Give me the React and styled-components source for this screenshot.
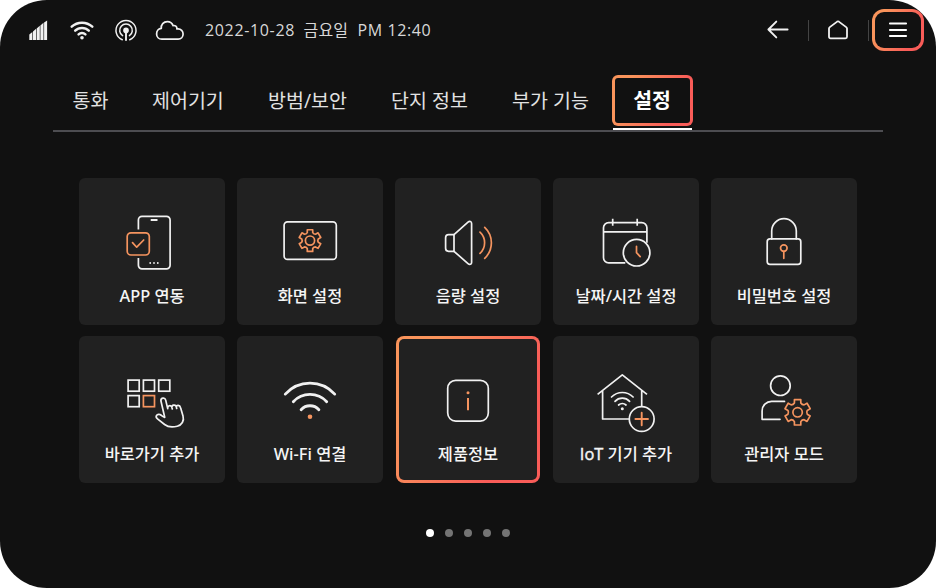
import React from "react";
import styled, { createGlobalStyle, css } from "styled-components";

const INK = "#f1f1f1";
const ACCENT = "#f5945f";
const BG = "#111111";
const TILE = "#212121";

const GlobalStyle = createGlobalStyle`
  * { box-sizing: border-box; }
  html, body { margin: 0; padding: 0; background: #fff; }
  body {
    width: 936px;
    height: 588px;
    overflow: hidden;
    font-family: "Open Sans", "Noto Sans CJK KR", sans-serif;
    -webkit-font-smoothing: antialiased;
  }
  button { font: inherit; color: inherit; border: 0; padding: 0; background: none; }
  svg { display: block; flex: none; }
`;

const gradientBorder = (fill) => css`
  border: 3px solid transparent;
  background:
    linear-gradient(${fill}, ${fill}) padding-box,
    linear-gradient(115deg, #f9945b 20%, #f95c58 75%) border-box;
`;

const Screen = styled.div`
  width: 936px;
  height: 588px;
  border-radius: 47px;
  background: ${BG};
  color: ${INK};
  display: flex;
  flex-direction: column;
`;

const TopBar = styled.header`
  height: 60px;
  padding: 0 12px 0 28px;
  display: flex;
  align-items: center;
  justify-content: space-between;
`;

const StatusGroup = styled.div`
  display: flex;
  align-items: center;
`;

const StatusIcons = styled.div`
  display: flex;
  width: 177px;
`;

const StatusText = styled.span`
  width: ${(p) => p.$width}px;
  font-size: 16px;
  line-height: 24px;
  color: #d8d8d8;
  white-space: nowrap;
  letter-spacing: ${(p) => p.$spacing || 0}px;
`;

const NavGroup = styled.nav`
  display: flex;
  align-items: center;
`;

const NavButton = styled.button`
  width: ${(p) => p.$width}px;
  height: 42px;
  display: flex;
  align-items: center;
  justify-content: center;
`;

const Divider = styled.i`
  width: 1.5px;
  height: 21px;
  background: #444;
`;

const MenuButton = styled.button`
  ${gradientBorder(BG)}
  width: 52px;
  height: 42px;
  margin-left: 3px;
  border-radius: 12px;
  display: flex;
  align-items: center;
  justify-content: center;
`;

const TabBar = styled.div`
  height: 57px;
  margin: 15px 53px 0;
  border-bottom: 2px solid #4d4d51;
  display: flex;
  align-items: flex-start;
`;

const Tab = styled.button`
  width: ${(p) => p.$width}px;
  height: 51px;
  padding-left: ${(p) => p.$inset || 0}px;
  font-size: 19.5px;
  line-height: 51px;
  text-align: left;
  white-space: nowrap;
  color: #e2e2e2;
`;

const ActiveTab = styled.div`
  width: 81px;
  height: 55px;
  display: flex;
  flex-direction: column;
  align-items: center;
  justify-content: space-between;
`;

const ActiveTabBox = styled.button`
  ${gradientBorder(BG)}
  width: 81px;
  height: 51px;
  padding-right: 1px;
  border-radius: 6px;
  font-size: 20.5px;
  font-weight: 700;
  line-height: 45px;
  color: #fff;
`;

const ActiveTabLine = styled.span`
  width: 79px;
  height: 2.5px;
  background: #fff;
`;

const TileGrid = styled.main`
  display: grid;
  grid-template-columns: repeat(5, 146px);
  grid-auto-rows: 147px;
  gap: 11px 12px;
  margin: 46px 79px 0;
`;

const Tile = styled.button`
  width: 146px;
  height: 147px;
  padding-top: 28px;
  border-radius: 6px;
  background: ${TILE};
  display: flex;
  flex-direction: column;
  align-items: center;
  ${(p) =>
    p.$highlighted &&
    css`
      ${gradientBorder(TILE)}
      width: 144px;
      margin: 0 1px;
      padding-top: 25px;
      border-radius: 8px;
    `}
`;

const TileLabel = styled.span`
  height: 36px;
  font-family: "Noto Sans", "Noto Sans CJK KR", sans-serif;
  font-size: 16.4px;
  font-weight: 500;
  line-height: 36px;
  white-space: nowrap;
  color: #f5f5f5;
`;

/* Latin run with a plain-stem capital I. */
const PlainLatin = styled.span`
  font-family: "Open Sans", sans-serif;
  -webkit-text-stroke: 0.4px #f5f5f5;
`;

const Pager = styled.footer`
  display: flex;
  justify-content: center;
  gap: 11px;
  margin-top: 46px;
`;

const Dot = styled.span`
  width: 8px;
  height: 8px;
  border-radius: 50%;
  background: ${(p) => (p.$on ? "#fff" : "#747474")};
`;

const IconSvg = styled.svg.attrs({ width: 72, height: 72, viewBox: "0 0 72 72" })`
  fill: none;
  stroke: ${INK};
  stroke-width: 1.7;
  stroke-linecap: round;
  stroke-linejoin: round;
  .accent { stroke: ${ACCENT}; }
  .accent-fill { fill: ${ACCENT}; stroke: none; }
  .ink-fill { fill: ${INK}; stroke: none; }
`;

/* Six-tooth cog outline centred on (cx, cy); r is the tip radius. */
function cogPath(cx, cy, r) {
  const at = (radius, deg) => {
    const a = (deg * Math.PI) / 180;
    return `${(cx + radius * Math.cos(a)).toFixed(2)} ${(cy + radius * Math.sin(a)).toFixed(2)}`;
  };
  const root = r * 0.75;
  let d = "";
  for (let i = 0; i < 6; i++) {
    const t = -90 + i * 60;
    d += `${i ? "L" : "M"}${at(root, t - 19)}L${at(r, t - 14)}L${at(r, t + 14)}L${at(root, t + 19)}`;
    d += `Q${at(r * 0.66, t + 30)} ${at(root, t + 41)}`;
  }
  return d + "Z";
}

const AppLinkIcon = () => (
  <IconSvg>
    <path d="M22.4 23.5V14a3.6 3.6 0 0 1 3.6-3.6h24.5A3.6 3.6 0 0 1 54.1 14v45.3a3.6 3.6 0 0 1-3.6 3.6H26a3.6 3.6 0 0 1-3.6-3.6v-7.3" strokeLinecap="butt" />
    <path d="M34.7 14h6.8" strokeLinecap="butt" strokeWidth="2" />
    <path d="M34.2 57h.01M38 57h.01M41.8 57h.01" strokeWidth="1.8" />
    <rect className="accent" x="11.2" y="26.8" width="22.1" height="22.2" rx="3.8" />
    <path className="accent" d="M16.5 36.6l4.2 4.6 7-7.2" />
  </IconSvg>
);

const DisplayIcon = () => (
  <IconSvg>
    <rect x="10.1" y="15.8" width="52.2" height="37.6" rx="3.4" />
    <path className="accent" d={cogPath(36, 34.6, 11.2)} />
    <circle className="accent" cx="36" cy="34.6" r="4.6" />
  </IconSvg>
);

const SoundIcon = () => (
  <IconSvg>
    <path d="M22 28.7h-5.4a3 3 0 0 0-3 3v10.6a3 3 0 0 0 3 3H22z" />
    <path d="M22 28.7L36 16.2c1.6-1.4 3.6-.8 3.6 1.2v39c0 2-2 2.6-3.6 1.2L22 45.3" />
    <path className="accent" d="M48 26.2a14.5 14.5 0 0 1 0 21.2M52.7 21.3a21.3 21.3 0 0 1 0 31" />
  </IconSvg>
);

const CalendarIcon = () => (
  <IconSvg>
    <path d="M35.3 56.9H18.7a5.2 5.2 0 0 1-5.2-5.2V21.8a5.2 5.2 0 0 1 5.2-5.2h33a5.2 5.2 0 0 1 5.2 5.2v15M13.5 25.8h43.4M22.7 12.7v7M47.2 12.7v7" strokeLinecap="butt" />
    <circle cx="46.6" cy="46.7" r="13.3" />
    <path className="accent" d="M46.5 40.3v6.4l3.7 3.9" />
  </IconSvg>
);

const LockIcon = () => (
  <IconSvg>
    <rect x="19.2" y="32.9" width="33.6" height="25.5" rx="2.8" />
    <path d="M23.7 32.9V25a12.3 12.3 0 0 1 24.6 0v7.9" />
    <circle className="accent" cx="35.8" cy="42.1" r="3.3" />
    <path className="accent" d="M35.8 45.4v6.9" />
  </IconSvg>
);

const SHORTCUT_CELLS = [
  [12.1, 16.1],
  [27.4, 16.1],
  [42.7, 16.1],
  [12.1, 31.6],
];

const ShortcutIcon = () => (
  <IconSvg>
    {SHORTCUT_CELLS.map(([x, y]) => (
      <rect key={`${x}-${y}`} x={x} y={y} width="11.1" height="11.1" strokeLinejoin="miter" />
    ))}
    <rect className="accent" x="27.4" y="31.6" width="11.1" height="11.1" strokeLinejoin="miter" />
    <path d="M48.7 53.3L45 37.3c-.8-3.4 3.8-4.6 4.7-1.2l2 8.5c-.5-3 3.4-4.2 4.2-1.2l.4 1.6-.4-1.6c-.3-2.6 3.7-3.3 4.4-.5l.4 1.6-.4-1.6c0-2 3.5-2.3 4.3.8l2.4 8.3c1.4 5-1.2 9-5.7 10.2-4.7 1.3-9.3 1-12.7-1.7l-7.1-5.6c-2.7-2.1-.8-5.1 2-4.5 2.1.4 2.9 2.4 5.2 2.9z" />
  </IconSvg>
);

const WifiIcon = () => (
  <IconSvg>
    <g strokeWidth="2.8">
      <path d="M11.3 30.1a33.2 33.2 0 0 1 49.4 0" />
      <path d="M19.3 37.7a22.8 22.8 0 0 1 33.4 0" />
      <path d="M27.1 45.7a12 12 0 0 1 17.8 0" />
    </g>
    <circle className="accent-fill" cx="36" cy="52.7" r="2.3" />
  </IconSvg>
);

const InfoIcon = () => (
  <IconSvg>
    <rect x="15.7" y="16.3" width="40.6" height="40.8" rx="8" />
    <circle className="accent-fill" cx="36" cy="28.7" r="1.5" />
    <path className="accent" d="M36 34v12.2" strokeWidth="2" strokeLinecap="butt" />
  </IconSvg>
);

const IotIcon = () => (
  <IconSvg>
    <path d="M7.6 30.4L32.3 10.9 57 30.4M12.6 26.8V55h26.6M51.7 26.8v15.6" strokeLinecap="butt" />
    <path d="M21.5 33a15.2 15.2 0 0 1 21.6 0M25 37.3a10 10 0 0 1 14.6 0M28.6 41a5.5 5.5 0 0 1 7.4 0" />
    <circle className="ink-fill" cx="32.3" cy="44.8" r="1.5" />
    <circle cx="51.7" cy="55" r="12.4" />
    <path className="accent" d="M51.7 48.7v12.6M45.4 55H58" strokeWidth="1.9" />
  </IconSvg>
);

const AdminIcon = () => (
  <IconSvg>
    <circle cx="32.4" cy="21.7" r="9.8" />
    <path d="M36.5 37.4H23.6a9.5 9.5 0 0 0-9.5 9.5v8.4H32" />
    <path className="accent" d={cogPath(49.6, 48.3, 13.1)} />
    <circle className="accent" cx="49.6" cy="48.3" r="4.7" />
  </IconSvg>
);

const StatusGlyphs = () => (
  <svg width="160" height="28" viewBox="28 15 160 28" fill="none" stroke={INK} strokeLinecap="round" strokeLinejoin="round">
    <g fill={INK} stroke="none">
      <path d="M29.3 33.6l3.1-2.6V39h-3.1z" />
      <path d="M33 30.5l3.1-2.7V39H33z" />
      <path d="M36.7 27.5l3.1-2.7V39h-3.1z" />
      <path d="M40.4 24.5l3.1-2.7V39h-3.1z" />
      <path d="M44.1 21.5l3-2V39h-3z" />
    </g>
    <g strokeWidth="2.5">
      <path d="M71.7 25.7a15.3 15.3 0 0 1 20.6 0" />
      <path d="M75.2 29.7a9.7 9.7 0 0 1 13.6 0" />
      <path d="M78.6 33.4a5 5 0 0 1 6.8 0" />
    </g>
    <circle cx="82" cy="36.8" r="1.8" fill={INK} stroke="none" />
    <g strokeWidth="1.5">
      <path d="M122.3 38.7a10 10 0 1 1 7.4 0" />
      <path d="M122.6 34.7a6.3 6.3 0 1 1 6.8 0" />
      <path d="M126 30v9" strokeWidth="1.9" />
    </g>
    <circle cx="126" cy="29.4" r="2.8" fill={INK} stroke="none" />
    <path d="M161.8 38.2h16.4c2.8 0 4.9-2.3 4.9-5.2s-2.2-5.1-5-5.1c-.4 0-.8 0-1.2.1.3-2.5-1.8-3.900-3.8-3.400-1-2.500-3.100-4-5.700-4-3.900 0-6.600 3-6.100 6.800-2.700.2-4.700 2.600-4.700 5.500 0 3.200 2.200 5.300 5.200 5.300z" strokeWidth="1.7" />
  </svg>
);

const BackIcon = () => (
  <svg width="22" height="20" viewBox="0 0 22 20" fill="none" stroke={INK} strokeWidth="1.9" strokeLinecap="round" strokeLinejoin="round">
    <path d="M20.6 9.5H1.4M9.3 1.6L1.4 9.5l7.9 7.9" />
  </svg>
);

const HomeIcon = () => (
  <svg width="22" height="20" viewBox="0 0 22 20" fill="none" stroke={INK} strokeWidth="1.8" strokeLinejoin="round">
    <path d="M10.2 1.6a1.4 1.4 0 0 1 1.6 0l7.400 5.500c.5.400.8.900.8 1.500v8.200a1.500 1.500 0 0 1-1.500 1.500h-15A1.500 1.500 0 0 1 2 16.800V8.600c0-.6.300-1.100.8-1.500z" />
  </svg>
);

const MenuIcon = () => (
  <svg width="20" height="16" viewBox="0 0 20 16" fill="none" stroke="#fff" strokeWidth="1.9" strokeLinecap="round">
    <path d="M1.9 1.5h16.2M1.9 8h16.2M1.9 14h16.2" />
  </svg>
);

const TABS = [
  { text: "통화", inset: 19.5, width: 99 },
  { text: "제어기기", width: 116 },
  { text: "방범/보안", width: 123 },
  { text: "단지 정보", width: 121 },
  { text: "부가 기능", width: 100 },
];

const TILES = [
  { text: "APP 연동", Icon: AppLinkIcon },
  { text: "화면 설정", Icon: DisplayIcon },
  { text: "음량 설정", Icon: SoundIcon },
  { text: "날짜/시간 설정", Icon: CalendarIcon },
  { text: "비밀번호 설정", Icon: LockIcon },
  { text: "바로가기 추가", Icon: ShortcutIcon },
  { text: "Wi-Fi 연결", Icon: WifiIcon },
  { text: "제품정보", Icon: InfoIcon, highlighted: true },
  { latin: "IoT", text: " 기기 추가", Icon: IotIcon },
  { text: "관리자 모드", Icon: AdminIcon },
];

export default function App() {
  return (
    <>
      <GlobalStyle />
      <Screen>
        <TopBar>
          <StatusGroup>
            <StatusIcons>
              <StatusGlyphs />
            </StatusIcons>
            <StatusText $width={98.5} $spacing={0.65}>2022-10-28</StatusText>
            <StatusText $width={54} $spacing={0.2}>금요일</StatusText>
            <StatusText $width={76} $spacing={0.6}>PM 12:40</StatusText>
          </StatusGroup>
          <NavGroup>
            <NavButton $width={59}><BackIcon /></NavButton>
            <Divider />
            <NavButton $width={58.5}><HomeIcon /></NavButton>
            <Divider />
            <MenuButton><MenuIcon /></MenuButton>
          </NavGroup>
        </TopBar>
        <TabBar>
          {TABS.map((t) => (
            <Tab key={t.text} $width={t.width} $inset={t.inset}>{t.text}</Tab>
          ))}
          <ActiveTab>
            <ActiveTabBox>설정</ActiveTabBox>
            <ActiveTabLine />
          </ActiveTab>
        </TabBar>
        <TileGrid>
          {TILES.map(({ latin, text, Icon, highlighted }) => (
            <Tile key={text} $highlighted={highlighted}>
              <Icon />
              <TileLabel>
                {latin && <PlainLatin>{latin}</PlainLatin>}
                {text}
              </TileLabel>
            </Tile>
          ))}
        </TileGrid>
        <Pager>
          {[0, 1, 2, 3, 4].map((i) => (
            <Dot key={i} $on={i === 0} />
          ))}
        </Pager>
      </Screen>
    </>
  );
}
